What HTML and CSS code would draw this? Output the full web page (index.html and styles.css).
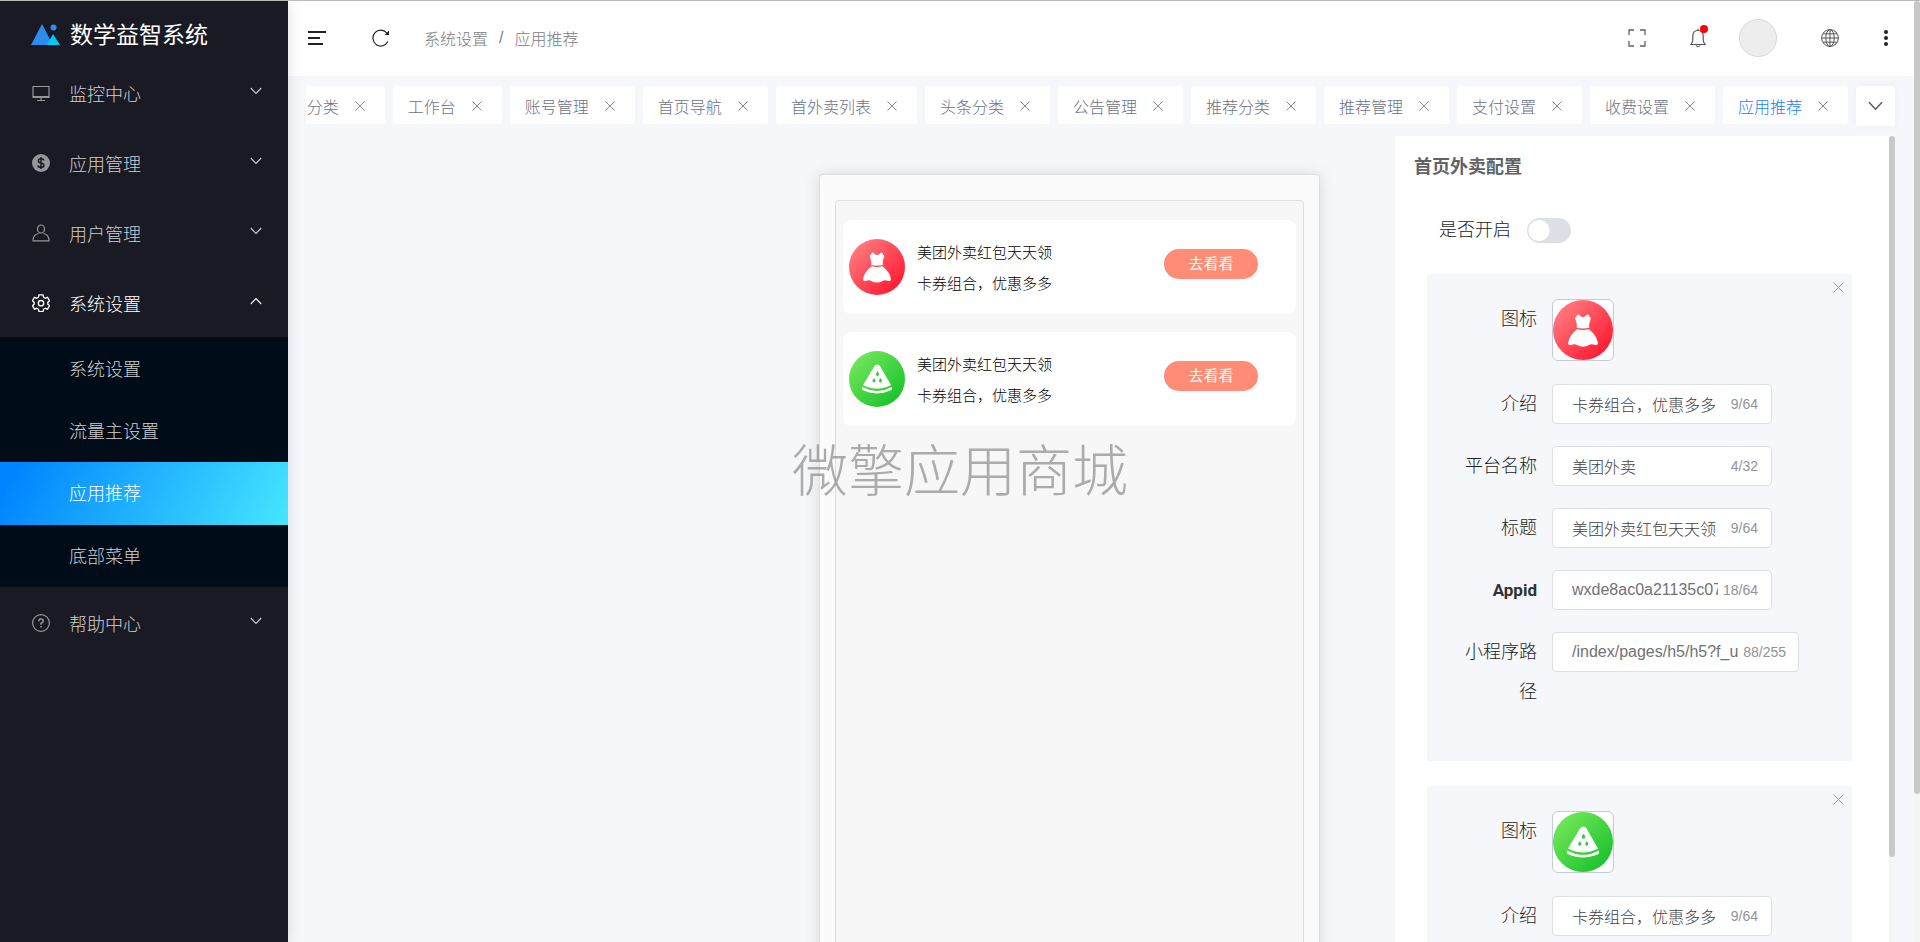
FILE: index.html
```html
<!DOCTYPE html>
<html lang="zh-CN">
<head>
<meta charset="utf-8">
<title>数学益智系统</title>
<link rel="stylesheet" href="styles.css">
</head>
<body>
<svg class="defs" aria-hidden="true">
  <defs>
    <linearGradient id="red" x1="0" y1="0" x2="1" y2="1"><stop offset="0.1" stop-color="#ff7d80"/><stop offset="0.9" stop-color="#ff1730"/></linearGradient>
    <linearGradient id="green" x1="0" y1="0" x2="1" y2="1"><stop offset="0.1" stop-color="#74e85a"/><stop offset="0.9" stop-color="#18c12c"/></linearGradient>
    <symbol id="down" viewBox="0 0 12 8"><path d="M.8 1L6 6.500L11.200 1" fill="none" stroke="currentColor" stroke-width="1.1"/></symbol>
    <symbol id="close" viewBox="0 0 11 11"><path d="M.5.5l10 10M10.500.500l-10 10" fill="none" stroke="currentColor" stroke-width="0.9"/></symbol>
    <symbol id="dress" viewBox="0 0 56 56">
      <circle cx="28" cy="28" r="28" fill="url(#red)"/>
      <path d="M22.500 14q1.200-.8 2.200 0q1 2 3.300 2t3.300-2q1-.8 2.200 0q.2 1.700 1.500 2.300q.4 1-.2 2.500q-1.500 3.500-1 7.200q-5.800 1-11.600 0q.5-3.700-1-7.200q-.6-1.500-.2-2.500q1.300-.6 1.500-2.300zM22.500 27.300q5.500 1.200 11 0q7.500 6 8.500 13q-.2 1.500-1.500 1.700q-1.500.3-4-.7q-1.500-.3-2.800.7q-2.700 1.600-5.700 1.600t-5.700-1.600q-1.300-1-2.800-.7q-2.500 1-4 .7q-1.300-.2-1.500-1.700q1-7 8.500-13z" fill="#fff"/>
    </symbol>
    <symbol id="melon" viewBox="0 0 56 56">
      <circle cx="28" cy="28" r="28" fill="url(#green)"/>
      <path d="M28.500 13.500q1.500 0 2.500 1.500l11 19q-13.500 7.500-28 0l11.500-19q1-1.500 3-1.500z" fill="#fff"/>
      <path d="M13.500 36.500q14.500 8 29 0v2q-14.500 7-29 0z" fill="#fff" stroke="#fff" stroke-width="1" stroke-linejoin="round"/>
      <path d="M28.500 20q3 4.500 0 5q-3-.5 0-5zM25 27q3 4 0 4.500q-3-.5 0-4.500zM31.500 27q3 4 0 4.500q-3-.5 0-4.500z" fill="#2fcb38"/>
    </symbol>
  </defs>
</svg>
<div class="app">
  <aside class="side">
    <div class="brand">
      <svg width="30" height="24" viewBox="0 0 30 24"><path d="M11 1l11 21H0z" fill="#2d8cf0"/><path d="M22 11l7 11H16z" fill="#00c8fa"/><circle cx="22.500" cy="4.500" r="3" fill="#2d8cf0"/></svg>
      <span>数学益智系统</span>
    </div>
    <nav>
      <button class="item"><svg class="ico" viewBox="0 0 18 18"><path d="M1 2.500h16v11H1zM1 12.500h16M9 13v3M5 16.500h8" fill="none" stroke="currentColor" stroke-width="1.2"/></svg><span>监控中心</span><svg class="arrow"><use href="#down"/></svg></button>
      <button class="item"><svg class="ico" viewBox="0 0 18 18"><circle cx="9" cy="9" r="9" fill="currentColor"/><path d="M12 6.500q-.5-1.800-3-1.800t-2.700 2q0 1.700 2.700 2.200t2.900 2.300q0 2.200-2.900 2.200t-3.100-2M9 3v12" fill="none" stroke="#191a23" stroke-width="1.500"/></svg><span>应用管理</span><svg class="arrow"><use href="#down"/></svg></button>
      <button class="item"><svg class="ico" viewBox="0 0 18 18"><path d="M9 1a3.500 4 0 0 1 0 8a3.500 4 0 0 1 0-8zM6.500 9.500Q1 10.500 1 16.800h16Q17 10.500 11.500 9.500" fill="none" stroke="currentColor" stroke-width="1.200"/></svg><span>用户管理</span><svg class="arrow"><use href="#down"/></svg></button>
      <button class="item open"><svg class="ico" viewBox="0 0 18 18"><path d="M7 .8h4l.5 2.400 1.800 1 2.300-.8 2 3.400-1.800 1.600v1.700l1.800 1.600-2 3.400-2.300-.8-1.800 1-.5 2.400H7l-.5-2.400-1.800-1-2.300.8-2-3.400 1.800-1.600V8.400L.4 6.800l2-3.400 2.300.8 1.800-1z" fill="none" stroke="currentColor" stroke-width="1.300"/><circle cx="9" cy="9.200" r="2.700" fill="none" stroke="currentColor" stroke-width="1.400"/></svg><span>系统设置</span><svg class="arrow up"><use href="#down"/></svg></button>
      <div class="sub">
        <a href="#">系统设置</a>
        <a href="#">流量主设置</a>
        <a href="#" class="active">应用推荐</a>
        <a href="#">底部菜单</a>
      </div>
      <button class="item"><svg class="ico" viewBox="0 0 18 18"><circle cx="9" cy="9" r="8.400" fill="none" stroke="currentColor" stroke-width="1.200"/><path d="M6.700 7.200Q6.800 5 9 5t2.300 2Q11.300 8.300 9 9.200v1.600M9 12v1.600" fill="none" stroke="currentColor" stroke-width="1.500"/></svg><span>帮助中心</span><svg class="arrow"><use href="#down"/></svg></button>
    </nav>
  </aside>
  <div class="body">
    <header class="top">
      <button class="icon" aria-label="折叠菜单"><svg width="20" height="16" viewBox="0 0 20 16"><path d="M1 2h18M1 8h12M1 14h15" stroke="#222" stroke-width="1.800"/></svg></button>
      <button class="icon refresh" aria-label="刷新"><svg width="18" height="18" viewBox="0 0 18 18"><path d="M15.800 12.500A7.800 8 0 1 1 14.800 4" fill="none" stroke="#222" stroke-width="1.200"/><path d="M17 1.500v4.500h-4.500z" fill="#222"/></svg></button>
      <div class="crumbs"><a href="#">系统设置</a><span>/</span><span>应用推荐</span></div>
      <div class="tools">
        <button class="icon" aria-label="全屏"><svg width="18" height="18" viewBox="0 0 18 18"><path d="M1 6V1h5M12 1h5v5M17 12v5h-5M6 17H1v-5" fill="none" stroke="#606060" stroke-width="1.300"/></svg></button>
        <button class="icon bell" aria-label="通知"><svg width="18" height="20" viewBox="0 0 18 20"><path d="M9 1v1.500M2 16.500q1.800-2 1.800-5V8q0-5.500 5.200-5.500T14.200 8v3.500q0 3 1.800 5zM7 17.500q2 2.500 4 0" fill="none" stroke="#555" stroke-width="1.200"/></svg><i class="dot"></i></button>
        <button class="avatar" aria-label="用户"></button>
        <button class="icon globe" aria-label="语言"><svg width="18" height="18" viewBox="0 0 18 18"><g fill="none" stroke="#555" stroke-width="1"><circle cx="9" cy="9" r="8.400"/><ellipse cx="9" cy="9" rx="4.200" ry="8.400"/><path d="M9 .5v17M.5 9h17M2 4.800h14M2 13.200h14"/></g></svg></button>
        <button class="icon" aria-label="更多"><svg width="6" height="18" viewBox="0 0 6 18"><g fill="#222"><circle cx="3" cy="3" r="2"/><circle cx="3" cy="9" r="2"/><circle cx="3" cy="15" r="2"/></g></svg></button>
      </div>
    </header>
    <div class="tabbar">
      <div class="tabs">
        <button>应用分类<svg><use href="#close"/></svg></button>
        <button>工作台<svg><use href="#close"/></svg></button>
        <button>账号管理<svg><use href="#close"/></svg></button>
        <button>首页导航<svg><use href="#close"/></svg></button>
        <button>首外卖列表<svg><use href="#close"/></svg></button>
        <button>头条分类<svg><use href="#close"/></svg></button>
        <button>公告管理<svg><use href="#close"/></svg></button>
        <button>推荐分类<svg><use href="#close"/></svg></button>
        <button>推荐管理<svg><use href="#close"/></svg></button>
        <button>支付设置<svg><use href="#close"/></svg></button>
        <button>收费设置<svg><use href="#close"/></svg></button>
        <button class="active"><span>应用推荐</span><svg><use href="#close"/></svg></button>
      </div>
      <button class="more" aria-label="更多标签"><svg width="15" height="10"><use href="#down"/></svg></button>
    </div>
    <main class="main">
      <section class="stage">
        <div class="phone"><div class="screen">
          <article class="promo"><svg class="pic"><use href="#dress"/></svg><div class="txt"><p>美团外卖红包天天领</p><p>卡券组合，优惠多多</p></div><button>去看看</button></article>
          <article class="promo"><svg class="pic"><use href="#melon"/></svg><div class="txt"><p>美团外卖红包天天领</p><p>卡券组合，优惠多多</p></div><button>去看看</button></article>
        </div></div>
      </section>
      <section class="panel">
        <h2>首页外卖配置</h2>
        <div class="switch-row"><label for="on">是否开启</label><input id="on" type="checkbox" class="switch"></div>
        <div class="card">
          <button class="x" aria-label="删除"><svg width="11" height="11"><use href="#close"/></svg></button>
          <div class="row pic-row"><span class="label">图标</span><button class="upload" aria-label="图标"><svg><use href="#dress"/></svg></button></div>
          <div class="row"><label class="label" for="a1">介绍</label><div class="field"><input id="a1" value="卡券组合，优惠多多"><span>9/64</span></div></div>
          <div class="row"><label class="label" for="a2">平台名称</label><div class="field"><input id="a2" value="美团外卖"><span>4/32</span></div></div>
          <div class="row"><label class="label" for="a3">标题</label><div class="field"><input id="a3" value="美团外卖红包天天领"><span>9/64</span></div></div>
          <div class="row"><label class="label latin" for="a4">Appid</label><div class="field code"><input id="a4" value="wxde8ac0a21135c07d"><span>18/64</span></div></div>
          <div class="row"><label class="label" for="a5">小程序路径</label><div class="field code wide"><input id="a5" value="/index/pages/h5/h5?f_userId=1"><span>88/255</span></div></div>
        </div>
        <div class="card">
          <button class="x" aria-label="删除"><svg width="11" height="11"><use href="#close"/></svg></button>
          <div class="row pic-row"><span class="label">图标</span><button class="upload" aria-label="图标"><svg><use href="#melon"/></svg></button></div>
          <div class="row"><label class="label" for="b1">介绍</label><div class="field"><input id="b1" value="卡券组合，优惠多多"><span>9/64</span></div></div>
        </div>
      </section>
      <div class="bar inner"><i></i></div>
    </main>
  </div>
  <div class="bar outer"><i></i></div>
  <div class="mark">微擎应用商城</div>
</div>
</body>
</html>
```
FILE: styles.css
```css
* { box-sizing: border-box; }
body {
  margin: 0;
  font-family: "Liberation Sans", "Noto Sans CJK SC", sans-serif;
  font-weight: 300;
  font-size: 16px;
  color: #1c1d20;
}
button, input { font: inherit; color: inherit; }
button { border: 0; padding: 0; background: none; cursor: pointer; }
a { color: inherit; text-decoration: none; }
p, h2 { margin: 0; }
svg { display: block; flex: none; }
.defs { position: absolute; width: 0; height: 0; }

.app {
  position: relative;
  display: flex;
  height: 100vh;
  overflow: hidden;
  background: #f5f7fa;
  border-top: 1px solid #bbb;
}

/* sidebar */
.side {
  flex: none;
  width: 288px;
  background: #191a23;
  color: #cfcfd2;
  box-shadow: 2px 0 12px rgba(0, 21, 41, .1);
  z-index: 1;
}
.brand {
  display: flex;
  align-items: center;
  gap: 9px;
  height: 56px;
  padding: 12px 0 0 31px;
  color: #fff;
  font-size: 23px;
  font-weight: 400;
  line-height: 32px;
}
.item {
  display: flex;
  align-items: center;
  width: 100%;
  height: 70px;
  padding: 1px 26px 0 32px;
  font-size: 18px;
  text-align: left;
}
.item span { flex: 1; margin-left: 19px; }
.item.open { color: #fff; }
.ico { width: 18px; height: 18px; color: #96969b; }
.open .ico { color: #fff; }
.arrow { width: 12px; height: 8px; margin-bottom: 3px; }
.arrow.up { transform: rotate(180deg); }
.sub { padding-top: 1px; background: #000c17; font-size: 18px; }
.sub a { display: block; padding: 2px 0 0 69px; line-height: 60px; }
.sub .active {
  line-height: 61px;
  color: #fff;
  background: linear-gradient(118deg, #0084ff 5%, #44e4ff 98%);
}

/* header */
.body { display: flex; flex-direction: column; flex: 1; min-width: 0; }
.top {
  display: flex;
  align-items: center;
  flex: none;
  height: 75px;
  padding: 0 25px 1px 19px;
  background: #fff;
}
.icon { position: relative; }
.refresh { margin-left: 45px; }
.crumbs { display: flex; align-items: center; gap: 11px; margin-left: 34px; color: #7c7c7c; }
.tools { display: flex; align-items: center; margin-left: auto; }
.bell { margin-left: 43px; }
.dot {
  position: absolute;
  top: -3px;
  right: -1px;
  width: 8px;
  height: 8px;
  border-radius: 50%;
  background: #f00;
}
.avatar {
  width: 38px;
  height: 38px;
  margin: 0 44px 0 32px;
  border: 1px solid #d8d8d8;
  border-radius: 50%;
  background: #ededed;
}
.globe { margin-right: 44px; }

/* tabs */
.tabbar {
  display: flex;
  flex: none;
  gap: 8px;
  height: 60px;
  padding: 10px 19px 10px 18px;
}
.tabs { display: flex; flex: 1; justify-content: flex-end; gap: 8px; min-width: 0; overflow: hidden; }
.tabs button {
  display: flex;
  align-items: center;
  flex: none;
  gap: 16px;
  height: 38px;
  padding: 2px 20px 0 15px;
  border-radius: 3px;
  background: #fff;
  color: #6c7282;
}
.tabs svg { width: 10px; height: 10px; }
.tabs .active span { color: #1a80ee; }
.more {
  display: flex;
  align-items: center;
  justify-content: center;
  width: 39px;
  height: 40px;
  border-radius: 3px;
  background: #fff;
  box-shadow: 0 0 8px rgba(0, 0, 0, .04);
  color: #555;
}

/* workspace */
.main { display: flex; flex: 1; min-height: 0; padding-right: 19px; }
.stage {
  display: flex;
  flex: 1;
  justify-content: flex-end;
  margin-left: 18px;
  padding: 38px 75px 0 0;
  overflow: hidden;
  background: #f6f7f8;
}
.phone {
  width: 501px;
  height: 960px;
  padding: 25px 15px;
  border: 1px solid #dcdee2;
  border-radius: 4px;
  background: #fbfbfb;
  box-shadow: 0 0 16px rgba(0, 0, 0, .12);
}
.screen {
  display: flex;
  flex-direction: column;
  gap: 18px;
  height: 100%;
  padding: 19px 7px;
  border: 1px solid #dcdee2;
  border-radius: 4px;
  background: #f7f7f7;
}
.promo {
  display: flex;
  align-items: center;
  height: 94px;
  padding: 0 38px 0 6px;
  border-radius: 8px;
  background: #fff;
  font-size: 15px;
  color: #000;
}
.pic { width: 56px; height: 56px; }
.txt { flex: 1; margin-left: 12px; padding-top: 1px; line-height: 31px; }
.promo button {
  width: 94px;
  height: 30px;
  margin-bottom: 6px;
  padding-bottom: 3px;
  border-radius: 15px;
  background: #ff8c76;
  color: #fff;
  font-weight: 400;
}

/* settings panel */
.panel {
  flex: none;
  width: 494px;
  padding: 19px 37px 0 32px;
  overflow: hidden;
  background: #fff;
}
.panel h2 { margin-left: -13px; font-size: 18px; line-height: 24px; color: #606266; font-weight: 700; }
.switch-row { display: flex; align-items: center; gap: 16px; height: 25px; margin: 39px 0 31px 12px; font-size: 18px; }
.switch-row label { padding-bottom: 5px; }
.switch {
  appearance: none;
  width: 44px;
  height: 25px;
  margin: 0;
  border-radius: 13px;
  background: radial-gradient(circle at 12px 50%, #fff 10px, #dcdfe6 11px);
}
.card { position: relative; padding: 25px 0 49px 35px; margin-bottom: 25px; background: #f5f7fa; }
.x { position: absolute; top: 8px; right: 8px; color: #909399; }
.row { display: flex; margin-bottom: 22px; }
.row:last-child { margin-bottom: 0; }
.pic-row { height: 63px; }
.label { width: 90px; padding-right: 15px; text-align: right; font-size: 18px; line-height: 40px; }
.latin { font-family: Roboto, sans-serif; font-size: 17px; font-weight: 700; color: #303133; }
.upload { width: 62px; height: 62px; padding: 0; border: 1px solid #c0ccda; border-radius: 6px; background: #fff; overflow: hidden; }
.upload svg { width: 60px; height: 60px; }
.field {
  display: flex;
  align-items: center;
  gap: 5px;
  width: 220px;
  height: 40px;
  padding: 0 13px 0 19px;
  border: 1px solid #dcdfe6;
  border-radius: 4px;
  background: #fff;
  color: #404245;
}
.field.code { color: #707276; }
.field.wide { width: 247px; padding-right: 12px; }
.field input { flex: 1; min-width: 0; padding: 0; border: 0; outline: 0; background: none; }
.field span { color: #909399; font-size: 14px; }

/* scroll bars */
.bar { flex: none; width: 6px; background: #f5f5f5; }
.bar i { display: block; border-radius: 3px; background: #c8c8c8; }
.inner i { height: 721px; }
.outer i { height: 793px; }

.mark {
  position: absolute;
  z-index: 2;
  top: 431px;
  left: 792px;
  color: rgba(120, 120, 120, .6);
  font-size: 56px;
  line-height: 80px;
  pointer-events: none;
}
```
